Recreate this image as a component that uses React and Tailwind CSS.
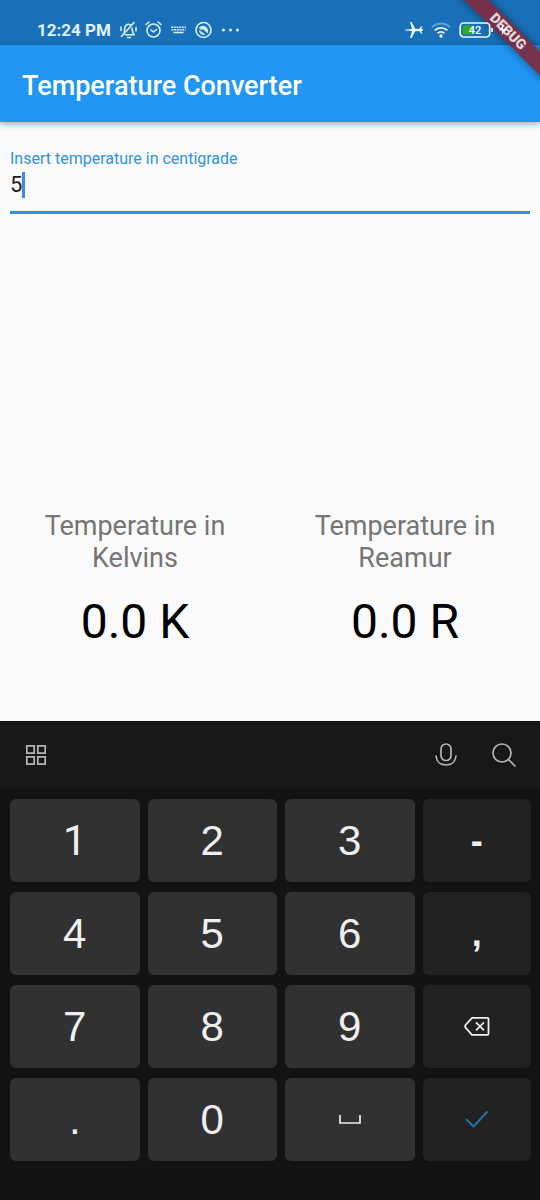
import React from 'react';

function StatusIcons() {
  return (
    <svg className="ml-2 h-6 w-[124px]" viewBox="0 0 124 24" fill="none" stroke="#d9f0ff" strokeWidth="1.6" strokeLinecap="round" strokeLinejoin="round" aria-hidden="true">
      <path d="M4 16.500c1.600-1.400 1.600-3 1.600-5 0-3 1.600-5 3.800-5.300 1.200 0 2.200.5 3 1.300M13 10c.5 3 .2 5 2.300 6.800H6.500M8.500 19.500h3M2 9v3.500M17 9.500v3.500M2.500 18.500 15 4.500" />
      <circle cx="34.500" cy="12.500" r="6.500" />
      <path d="M32 12l2.500 2 3-2.500M27 6.500l3-2.500M42 6.500l-3-2.500" />
      <g strokeLinecap="butt" strokeWidth="1.600">
        <path d="M52 9.300h15M52.500 11.800h14" strokeDasharray="2 .7" />
        <path d="M54.500 14.500h10" />
      </g>
      <circle cx="84.500" cy="12" r="7.500" />
      <path d="M80.500 9.500a5 5 0 0 1 8 5.500l-3-3a2 2 0 0 0-3-.5zM80.500 13a4.500 4.500 0 0 0 5 3.500z" fill="#d9f0ff" strokeWidth=".8" />
      <g fill="#d9f0ff" stroke="none">
        <circle cx="104.500" cy="12" r="1.600" />
        <circle cx="111.500" cy="12" r="1.600" />
        <circle cx="118.500" cy="12" r="1.600" />
      </g>
    </svg>
  );
}

function StatusBar() {
  return (
    <div className="flex h-[45px] items-end bg-[#1a70b8] pb-[3px] pl-[37px] pr-[29px]">
      <span className="text-[17px] leading-6 font-bold text-[#e0f3ff]">12:24 PM</span>
      <StatusIcons />
      <div className="relative z-30 ml-auto flex h-6 items-center">
        <svg className="h-5 w-5" viewBox="0 0 20 20" fill="#eaf7ff" aria-hidden="true">
          <path d="M19 10c0-.8-.6-1.200-1.500-1.200h-.3L18.500 6.500h-1.500L15 8.900l-3.800-.1L7.700 2H6l2 6.900-6 .5c-.8.1-1.300.3-1.300.6s.5.5 1.300.6l6 .5L6 18h1.700l3.500-6.800 3.800-.1 2 2.400h1.500l-1.300-2.300h.3c.9 0 1.500-.4 1.500-1.200z" />
        </svg>
        <svg className="ml-[7px] h-5 w-5" viewBox="0 0 20 20" fill="none" stroke="#eaf7ff" strokeWidth="1.900" aria-hidden="true">
          <path d="M.8 7.300a13 13 0 0 1 18.400 0" stroke="#5ba5de" />
          <path d="M3.700 10.400a9 9 0 0 1 12.600 0M6.600 13.300a5 5 0 0 1 6.800 0" />
          <circle cx="10" cy="16" r="1.700" fill="#eaf7ff" stroke="none" />
        </svg>
        <svg className="ml-2 h-5 w-[52px]" viewBox="0 0 52 20" aria-hidden="true">
          <rect x="1.200" y="3" width="29.500" height="14" rx="3.500" fill="none" stroke="#eaf7ff" strokeWidth="1.700" />
          <rect x="3.800" y="5.500" width="11" height="9" rx="1" fill="#35a82c" />
          <rect x="32.200" y="8" width="1.700" height="4" fill="#eaf7ff" />
          <text x="16" y="14" textAnchor="middle" fill="#fff" fontSize="11" fontWeight="500" fontFamily="Roboto, sans-serif">42</text>
          <path d="M44.500 4.500l-4.500 6h3.500l-1 5 5-6.500H44z" fill="#fff" />
        </svg>
      </div>
    </div>
  );
}

function DebugBanner() {
  return (
    <div className="pointer-events-none absolute top-0 right-0 z-20 h-24 w-24 overflow-hidden">
      <div className="absolute top-[23px] right-[-33px] h-[17px] w-[130px] rotate-45 bg-[#7b2c46]/95 text-center text-sm leading-[17px] font-black text-white/80 shadow-[0_0_8px_rgba(0,0,0,0.5)]">
        DEBUG
      </div>
    </div>
  );
}

function Reading({ label, value }) {
  return (
    <section className="flex flex-1 flex-col items-center gap-5 px-8 text-center">
      <h2 className="text-[27px] leading-8 text-[#757575]">{label}</h2>
      <output className="text-5xl leading-14 text-black">{value}</output>
    </section>
  );
}

function Key({ label, dark, children }) {
  return (
    <button
      type="button"
      aria-label={label}
      className={
        'flex h-[83px] items-center justify-center rounded-md leading-none text-[#efefef] ' +
        (dark ? 'bg-[#222222] text-4xl font-bold' : 'bg-[#313131] text-[42px]')
      }
    >
      {children}
    </button>
  );
}

function Keyboard() {
  return (
    <div className="bg-[#131313] pb-[39px] font-['Liberation_Sans',sans-serif]">
      <div className="flex h-[67px] items-center border-t border-[#0b0b0c] bg-[#17181a] pr-[23px] pl-6 text-[#b5b5b5]">
        <button type="button" aria-label="Keyboard menu">
          <svg className="h-6 w-6" viewBox="0 0 24 24" fill="none" stroke="currentColor" strokeWidth="1.700">
            <path d="M2.800 2.800h7.400v7.400H2.800zM13.800 2.800h7.400v7.400h-7.400zM2.800 13.800h7.400v7.400H2.800zM13.800 13.800h7.400v7.400h-7.400z" />
          </svg>
        </button>
        <button type="button" aria-label="Voice input" className="ml-auto">
          <svg className="h-6 w-6" viewBox="0 0 24 24" fill="none" stroke="currentColor" strokeWidth="1.700" strokeLinecap="round">
            <rect x="7" y="1" width="10" height="16.500" rx="5" />
            <path d="M2 13c.5 5.500 4.500 9 10 9s9.500-3.500 10-9" />
          </svg>
        </button>
        <button type="button" aria-label="Search" className="ml-[33px]">
          <svg className="h-[26px] w-[26px]" viewBox="0 0 26 26" fill="none" stroke="currentColor" strokeWidth="1.700" strokeLinecap="round">
            <circle cx="11" cy="11" r="9" />
            <path d="M17.500 17.500l6.500 6.500" />
          </svg>
        </button>
      </div>
      <div className="grid grid-cols-[129fr_129fr_129fr_108fr] gap-x-2 gap-y-[10px] pt-[11px] pr-[9px] pl-[10px]">
        <Key>
          <span className="font-[Roboto,sans-serif]">1</span>
        </Key>
        <Key>2</Key>
        <Key>3</Key>
        <Key dark>-</Key>
        <Key>4</Key>
        <Key>5</Key>
        <Key>6</Key>
        <Key dark>,</Key>
        <Key>7</Key>
        <Key>8</Key>
        <Key>9</Key>
        <Key dark label="Backspace">
          <svg className="h-6 w-7" viewBox="0 0 28 24" fill="none" stroke="currentColor" strokeWidth="1.800" strokeLinecap="round" strokeLinejoin="round">
            <path d="M9 2.800h15.500q1 0 1 1v15q0 1-1 1H9L2.500 12.600q-1-1.300 0-2.600zM13.500 7.800l7 7M20.500 7.800l-7 7" />
          </svg>
        </Key>
        <Key>.</Key>
        <Key>0</Key>
        <Key label="Space">
          <svg className="h-6 w-6" viewBox="0 0 24 24" fill="none" stroke="currentColor" strokeWidth="1.700">
            <path d="M2 7v8h20V7" />
          </svg>
        </Key>
        <Key dark label="Done">
          <svg className="h-6 w-6" viewBox="0 0 24 24" fill="none" stroke="#20739d" strokeWidth="2" strokeLinecap="round" strokeLinejoin="round">
            <path d="M1.500 11.500l7 7L22 4" />
          </svg>
        </Key>
      </div>
    </div>
  );
}

export default function App() {
  return (
    <div className="relative flex min-h-screen flex-col bg-[#fafafa] font-[Roboto,sans-serif]">
      <StatusBar />
      <DebugBanner />
      <header className="flex h-[77px] items-center bg-[#2196f3] px-[22px] pt-1 shadow-[0_2px_6px_rgba(0,0,0,0.35)]">
        <h1 className="text-[27px] leading-8 font-medium text-white">Temperature Converter</h1>
      </header>
      <main className="flex flex-1 flex-col justify-between px-[10px] pt-[27px] pb-[71px]">
        <div>
          <label htmlFor="centigrade" className="block text-base leading-5 text-[#2e93e6]">
            Insert temperature in centigrade
          </label>
          <div className="relative border-b-3 border-[#2e93e6] pb-3">
            <input
              id="centigrade"
              type="text"
              inputMode="decimal"
              defaultValue="5"
              className="block h-[30px] w-full bg-transparent text-[22px] text-[#212121] outline-none"
            />
            <span className="absolute top-[3px] left-3 h-[26px] w-[3px] bg-[#4285f4]" />
          </div>
        </div>
        <div className="-mx-[10px] flex">
          <Reading label="Temperature in Kelvins" value="0.0 K" />
          <Reading label="Temperature in Reamur" value="0.0 R" />
        </div>
      </main>
      <Keyboard />
    </div>
  );
}
